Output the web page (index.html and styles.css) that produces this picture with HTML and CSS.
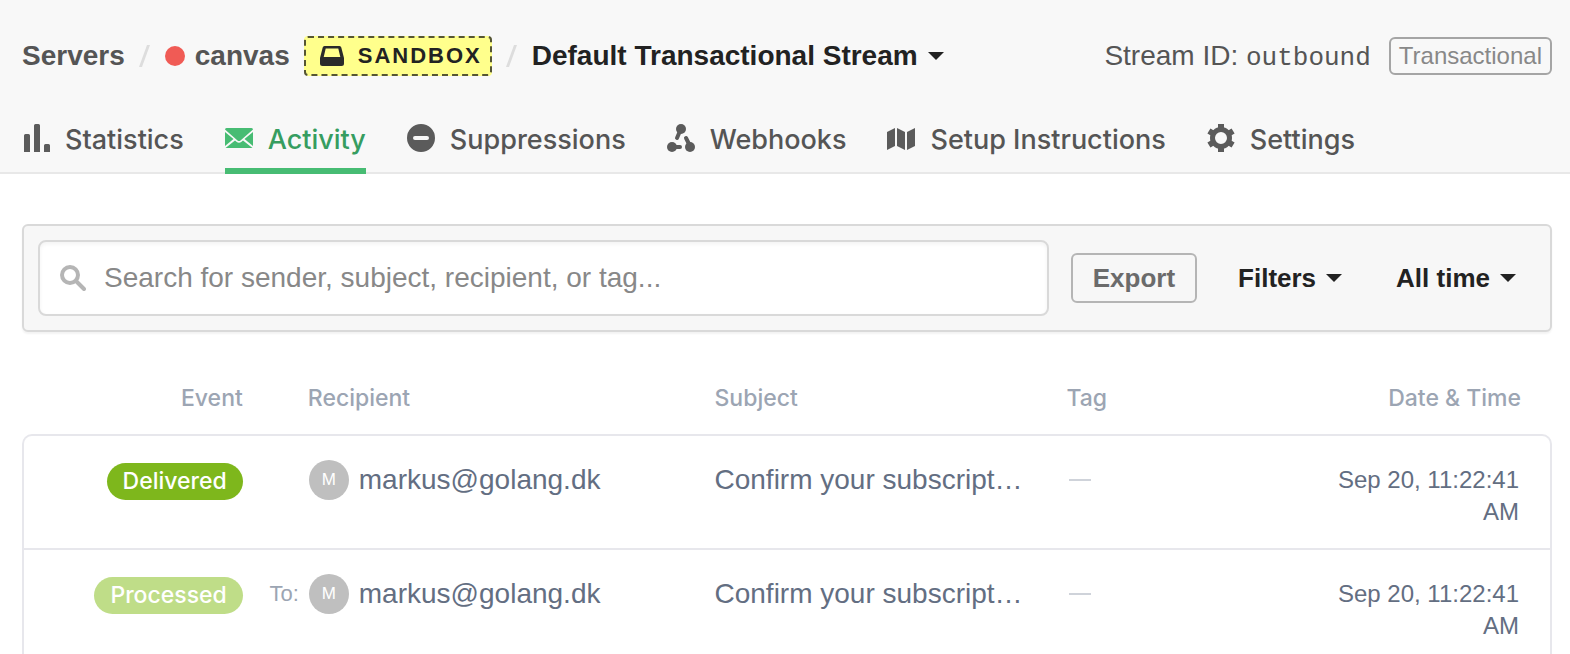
FILE: index.html
```html
<!DOCTYPE html>
<html lang="en">
<head>
  <meta charset="UTF-8" />
  <meta name="viewport" content="width=device-width, initial-scale=1" />
  <title>Activity</title>
  <link rel="stylesheet" href="styles.css">
</head>
<body>

  <header class="header">
    <div class="topbar">
      <nav class="breadcrumb" aria-label="Breadcrumb">
        <a href="#">Servers</a>
        <span class="slash"></span>
        <a href="#" class="server"><span class="dot"></span>canvas</a>
        <span class="sandbox">
          <svg width="24" height="20" viewBox="0 0 24 20"><path fill="#2a2a2a" fill-rule="evenodd" d="M4.500 0h15q1.500 0 1.800 1.500L24 12v5.500q0 2.500-2.500 2.500h-19Q0 20 0 17.500V12L2.700 1.500Q3 0 4.500 0zM5.700 2.500L3.700 11h16.600l-2-8.500z"/></svg>
          Sandbox
        </span>
        <span class="slash"></span>
        <button class="menu-btn stream">Default Transactional Stream <span class="caret"></span></button>
      </nav>
      <div class="stream-info">
        <span>Stream ID: <code>outbound</code></span>
        <span class="type">Transactional</span>
      </div>
    </div>

    <nav class="tabs" aria-label="Stream">
      <a href="#">
        <svg width="28" height="28" viewBox="0 0 28 28"><path d="M2 28V11.500q0-1.500 1.500-1.500h3Q8 10 8 11.500V28zM12 28V1.500Q12 0 13.500 0h3Q18 0 18 1.500V28zM22 28v-6.500q0-1.500 1.500-1.500h3q1.500 0 1.500 1.500V28z"/></svg>
        Statistics
      </a>
      <a href="#" class="active">
        <svg width="28" height="28" viewBox="0 0 28 28"><path d="M1.500 4h25Q28 4 28 5.500L15.500 16.500q-1.500 1.200-3 0L0 5.500Q0 4 1.500 4zM0 8l8.500 7L0 22zM28 8l-8.500 7 8.500 7zM10 16.500l1.500 1.200q2.500 2 5 0l1.500-1.200 9.500 7.500H.5z"/></svg>
        Activity
      </a>
      <a href="#">
        <svg width="28" height="28" viewBox="0 0 28 28"><path fill-rule="evenodd" d="M14 0a14 14 0 1 0 0 28 14 14 0 0 0 0-28zM8 12h12a2 2 0 0 1 0 4H8a2 2 0 0 1 0-4z"/></svg>
        Suppressions
      </a>
      <a href="#">
        <svg width="28" height="28" viewBox="0 0 28 28"><circle cx="14" cy="5" r="5"/><circle cx="5" cy="23" r="5"/><circle cx="23" cy="23" r="5"/><path d="M13 7l-3 7M19 14l3 6M7 23h6" stroke="currentColor" stroke-width="4" stroke-linecap="round"/></svg>
        Webhooks
      </a>
      <a href="#">
        <svg width="28" height="28" viewBox="0 0 28 28"><path d="M0 8l8-4v18l-8 4zM10 4l8 4v18l-8-4zM20 8l8-4v18l-8 4z"/></svg>
        Setup Instructions
      </a>
      <a href="#">
        <svg width="28" height="28" viewBox="0 0 28 28"><g fill="none" stroke="currentColor"><circle cx="14" cy="14" r="8.500" stroke-width="5"/><path stroke-width="6" d="M14 0v5M14 23v5M1.900 7l4.300 2.500M21.800 18.500l4.300 2.500M1.900 21l4.300-2.500M21.800 9.500L26.100 7"/></g></svg>
        Settings
      </a>
    </nav>
  </header>

  <main class="content">
    <form class="search-bar">
      <div class="search">
        <svg width="26" height="26" viewBox="0 0 26 26" fill="none" stroke="#b5b5b5" stroke-width="4"><circle cx="10" cy="10" r="8"/><path d="M16 16l8 8" stroke-linecap="round"/></svg>
        <input type="text" aria-label="Search activity" placeholder="Search for sender, subject, recipient, or tag..." />
      </div>
      <button type="button" class="export">Export</button>
      <button type="button" class="menu-btn">Filters <span class="caret"></span></button>
      <button type="button" class="menu-btn">All time <span class="caret"></span></button>
    </form>

    <table class="events">
      <thead>
        <tr>
          <th class="event">Event</th>
          <th class="recipient">Recipient</th>
          <th class="subject">Subject</th>
          <th class="tag">Tag</th>
          <th class="date">Date &amp; Time</th>
        </tr>
      </thead>
      <tbody>
        <tr>
          <td class="event"><span class="badge delivered">Delivered</span></td>
          <td class="recipient"><div class="person"><span class="to"></span><span class="avatar">M</span>markus@golang.dk</div></td>
          <td class="subject">Confirm your subscript…</td>
          <td class="tag"><span class="dash"></span></td>
          <td class="date">Sep 20, 11:22:41 AM</td>
        </tr>
        <tr>
          <td class="event"><span class="badge processed">Processed</span></td>
          <td class="recipient"><div class="person"><span class="to">To:</span><span class="avatar">M</span>markus@golang.dk</div></td>
          <td class="subject">Confirm your subscript…</td>
          <td class="tag"><span class="dash"></span></td>
          <td class="date">Sep 20, 11:22:41 AM</td>
        </tr>
      </tbody>
    </table>
  </main>

</body>
</html>
```
FILE: styles.css
```css
* {
  box-sizing: border-box;
}

body {
  margin: 0;
  font-family: "Liberation Sans", Arial, sans-serif;
  font-size: 28px;
  line-height: 40px;
  color: #555;
  background: #fff;
}

a {
  color: inherit;
  text-decoration: none;
}

button {
  padding: 0;
  border: none;
  background: none;
  font-family: inherit;
  font-size: 26px;
  font-weight: bold;
  color: #222;
  cursor: pointer;
}

/* Header */
.header {
  padding: 36px 18px 0 22px;
  background: #f8f8f8;
  border-bottom: 2px solid #e8e8e8;
}

.topbar {
  display: flex;
  justify-content: space-between;
  align-items: center;
}

.breadcrumb {
  display: flex;
  align-items: center;
  font-weight: bold;
  white-space: nowrap;
}

.slash {
  width: 3px;
  height: 22px;
  margin: 0 19px 0 18px;
  background: #ddd;
  transform: skewX(-20deg);
}

.server {
  display: flex;
  align-items: center;
  gap: 10px;
}

.dot {
  width: 20px;
  height: 20px;
  border-radius: 50%;
  background: #f05b55;
}

.sandbox {
  display: flex;
  align-items: center;
  gap: 14px;
  height: 40px;
  margin-left: 14px;
  padding: 0 8px 0 14px;
  border: 2px dashed #555533;
  border-radius: 4px;
  background: #ffff8c;
  color: #222;
  font-size: 22px;
  letter-spacing: 2px;
  text-transform: uppercase;
}

.menu-btn {
  display: flex;
  align-items: center;
  gap: 10px;
  white-space: nowrap;
}

.menu-btn.stream {
  font-size: 28px;
}

.caret {
  border: 8px solid transparent;
  border-top-color: #222;
  border-bottom: none;
}

.stream-info {
  display: flex;
  align-items: center;
  gap: 18px;
  white-space: nowrap;
}

.stream-info code {
  font-family: "Liberation Mono", monospace;
  font-size: 26px;
  line-height: 1;
}

.type {
  padding: 0 8px;
  border: 2px solid #a5a5a5;
  border-radius: 6px;
  font-size: 24px;
  line-height: 34px;
  color: #888;
}

.tabs {
  display: flex;
  gap: 41px;
  margin-top: 44px;
}

.tabs a {
  display: flex;
  gap: 15px;
  height: 54px;
  margin-bottom: -2px;
  font-family: Inter, sans-serif;
  font-size: 27px;
  font-weight: 500;
  white-space: nowrap;
}

.tabs svg {
  margin-top: 4px;
  fill: #5b5b5b;
  color: #5b5b5b;
}

.tabs .active {
  border-bottom: 6px solid #47bc73;
  color: #369d60;
}

.tabs .active svg {
  fill: #47bc73;
}

/* Search bar */
.content {
  padding: 50px 18px 0 22px;
}

.search-bar {
  display: flex;
  align-items: center;
  padding: 14px 34px 14px 14px;
  border: 2px solid #d9d9d9;
  border-radius: 6px;
  background: #f7f7f7;
  box-shadow: 0 2px 2px rgba(0, 0, 0, 0.05);
}

.search {
  display: flex;
  flex: 1;
  align-items: center;
  gap: 18px;
  height: 76px;
  padding: 0 20px;
  border: 2px solid #d9d9d9;
  border-radius: 8px;
  background: #fff;
  box-shadow: inset 0 2px 4px rgba(0, 0, 0, 0.05);
}

.search input {
  flex: 1;
  padding: 0;
  border: none;
  outline: none;
  background: none;
  font-family: inherit;
  font-size: 28px;
}

.search input::placeholder {
  color: #888;
}

.export {
  height: 50px;
  margin-left: 22px;
  padding: 0 20px;
  border: 2px solid #b5b5b5;
  border-radius: 6px;
  color: #6b6b6b;
}

.search-bar .menu-btn {
  margin-left: 41px;
}

.search-bar .menu-btn + .menu-btn {
  margin-left: 54px;
}

/* Events */
.events {
  width: 100%;
  margin-top: 46px;
  border-spacing: 0;
  table-layout: fixed;
}

.events th {
  padding: 0 0 16px;
  font-family: Inter, sans-serif;
  font-size: 23px;
  font-weight: 500;
  color: #9ca5b3;
  text-align: left;
}

.events td {
  height: 114px;
  padding: 24px 0 0;
  border-top: 2px solid #e7e7ec;
  color: #636e82;
  vertical-align: top;
}

.events td:first-child {
  border-left: 2px solid #e7e7ec;
}

.events td:last-child {
  border-right: 2px solid #e7e7ec;
}

.events tbody tr:first-child td:first-child {
  border-top-left-radius: 10px;
}

.events tbody tr:first-child td:last-child {
  border-top-right-radius: 10px;
}

.events .event {
  width: 16%;
  padding-right: 24px;
  text-align: right;
}

.events .recipient {
  width: 29%;
}

.events th.recipient {
  padding-left: 41px;
}

.events .subject {
  width: 23%;
  padding-left: 4px;
}

.events .tag {
  width: 17%;
  padding-left: 4px;
}

.events .date {
  width: 15%;
  padding-right: 31px;
  text-align: right;
}

.events td.date {
  padding-top: 28px;
  font-size: 24px;
  line-height: 32px;
}

.badge {
  display: inline-block;
  padding: 0 16px;
  border-radius: 19px;
  font-family: Inter, sans-serif;
  font-size: 23px;
  font-weight: 500;
  line-height: 37px;
  color: #fff;
}

.delivered {
  background: #7eb71c;
}

.processed {
  background: #bfdd88;
}

.person {
  display: flex;
  align-items: center;
}

.to {
  width: 32px;
  margin-right: 10px;
  font-size: 22px;
  color: #9ca5b3;
  text-align: right;
}

.avatar {
  width: 40px;
  margin-right: 10px;
  border-radius: 50%;
  background: #bfbfbf;
  color: #fff;
  font-size: 17px;
  text-align: center;
}

.dash {
  display: block;
  width: 22px;
  height: 2px;
  margin: 19px 0 0 3px;
  background: #cfd3da;
}
```
